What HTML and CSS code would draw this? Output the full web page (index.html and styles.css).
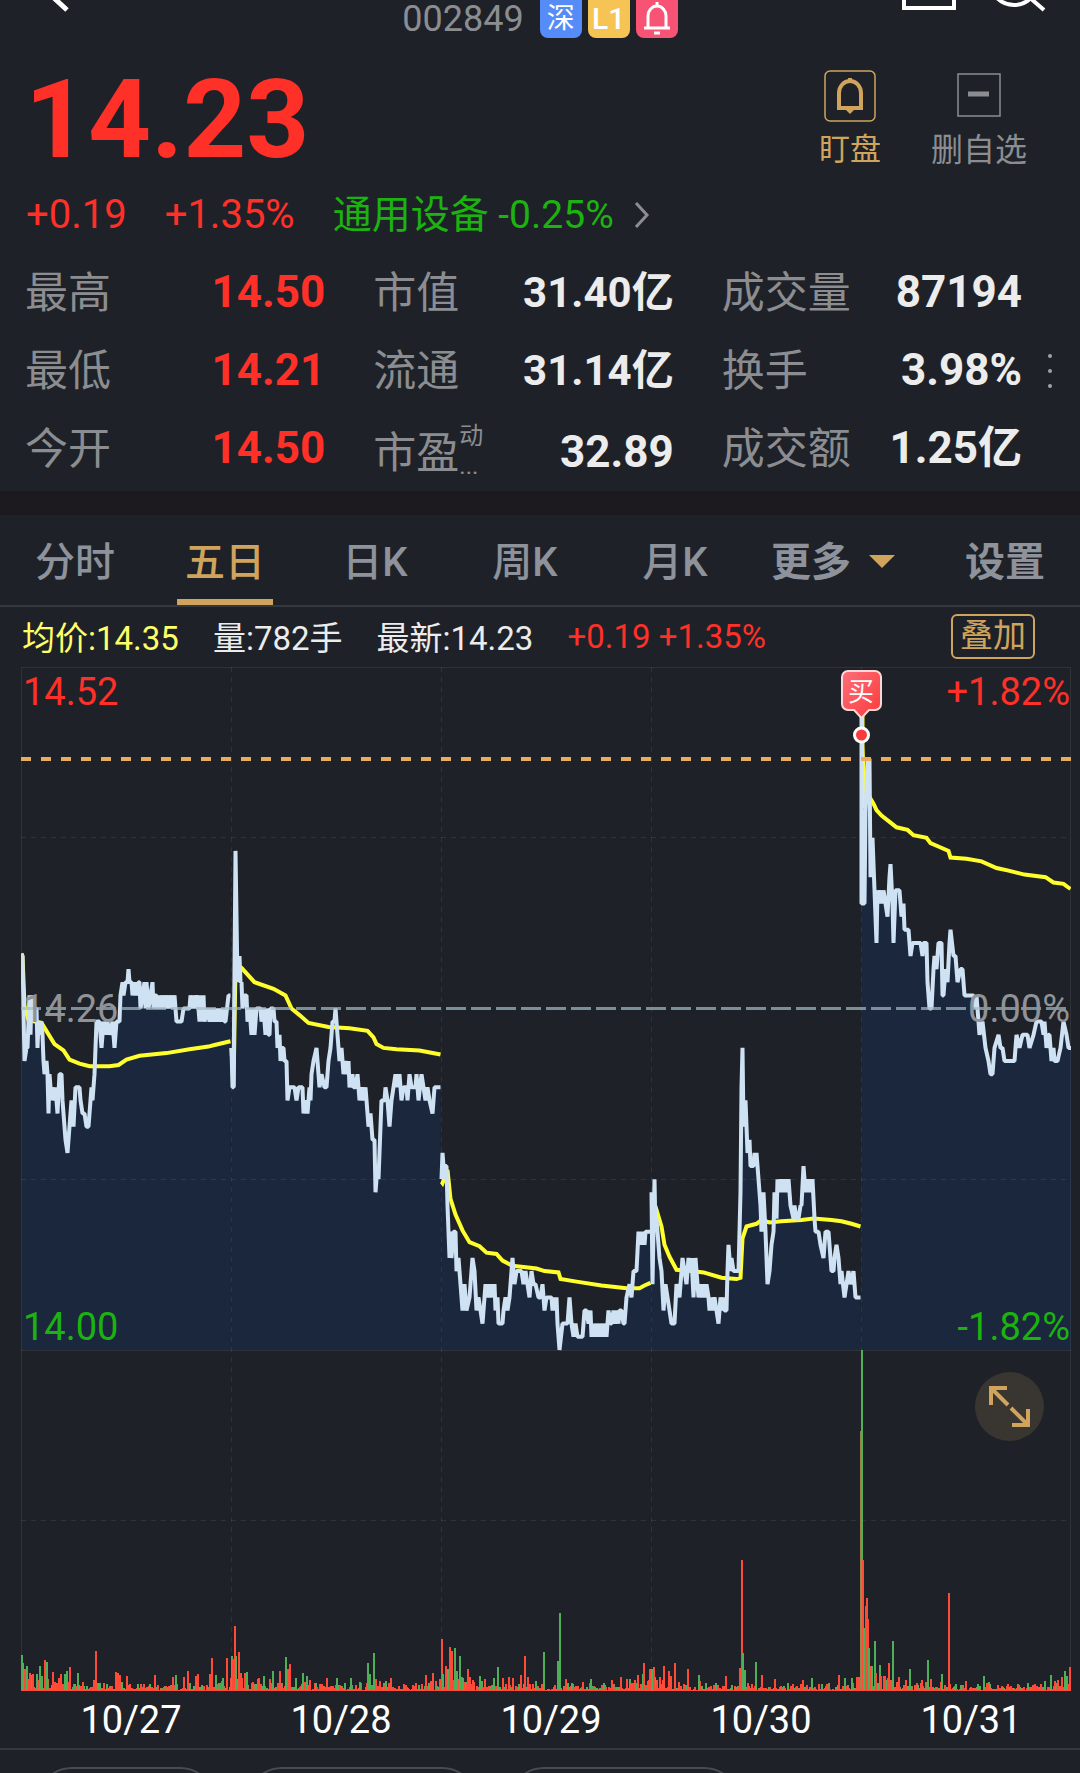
FILE: index.html
```html
<!DOCTYPE html>
<html lang="zh-CN">
<head>
  <meta charset="UTF-8" />
  <meta name="viewport" content="width=device-width, initial-scale=1.0" />
  <title>002849</title>
  <link rel="stylesheet" href="styles.css">
</head>
<body>
  <header class="topbar">
    <button class="icon-btn back" aria-label="返回">
      <svg width="60" height="38" viewBox="0 0 60 38"><path d="M34 -14 L22 -2 L35 10" class="stroke-white" /></svg>
    </button>
    <div class="code-line">
      <span class="code">002849</span>
      <span class="badge blue">深</span>
      <span class="badge yellow">L1</span>
      <span class="badge pink">
        <svg width="30" height="34" viewBox="0 0 30 34"><path d="M15 0v5M6 25V14a9 10 0 0 1 18 0v11M2 26h26M12 31h6" /></svg>
      </span>
    </div>
    <div class="top-actions">
      <button class="icon-btn" aria-label="分享">
        <svg width="56" height="38" viewBox="0 0 56 38"><path d="M4 -10V8H54V-10" class="stroke-white" /></svg>
      </button>
      <button class="icon-btn" aria-label="搜索">
        <svg width="56" height="38" viewBox="0 0 56 38"><circle cx="22" cy="-19" r="24" class="stroke-white" /><path d="M37 -3 L52 10" class="stroke-white" /></svg>
      </button>
    </div>
  </header>

  <section class="quote">
    <div class="price-row">
      <span class="price red">14.23</span>
      <div class="actions">
        <button class="action gold">
          <svg width="52" height="52" viewBox="0 0 52 52">
            <rect x="1" y="1" width="50" height="50" rx="5" stroke-width="1.5" />
            <path d="M26 8v3M15 38V23a11 12 0 0 1 22 0v15M13 38h26" stroke-width="4" />
            <path d="M22 40h8l-4 4z" fill="currentColor" stroke="none" />
          </svg>
          <span>盯盘</span>
        </button>
        <button class="action">
          <svg width="52" height="52" viewBox="0 0 52 52">
            <rect x="5" y="4" width="42" height="42" stroke-width="1.5" />
            <path d="M15 24h21" stroke-width="5" />
          </svg>
          <span>删自选</span>
        </button>
      </div>
    </div>

    <div class="change-row">
      <span class="red">+0.19</span>
      <span class="red">+1.35%</span>
      <a href="#" class="sector green">通用设备 -0.25%
        <svg width="16" height="28" viewBox="0 0 16 28"><path d="M2 2 L13 14 L2 26" /></svg>
      </a>
    </div>

    <div class="stats-wrap">
      <dl class="stats">
        <div><dt>最高</dt><dd class="red">14.50</dd></div>
        <div><dt>市值</dt><dd class="long">31.40亿</dd></div>
        <div><dt>成交量</dt><dd>87194</dd></div>
        <div><dt>最低</dt><dd class="red">14.21</dd></div>
        <div><dt>流通</dt><dd class="long">31.14亿</dd></div>
        <div><dt>换手</dt><dd>3.98%</dd></div>
        <div><dt>今开</dt><dd class="red">14.50</dd></div>
        <div class="pe"><dt>市盈<span class="pe-note"><small>动</small><small>...</small></span></dt><dd>32.89</dd></div>
        <div><dt>成交额</dt><dd>1.25亿</dd></div>
      </dl>
      <button class="icon-btn more-dots" aria-label="更多指标">
        <svg width="6" height="36" viewBox="0 0 6 36"><circle cx="3" cy="3" r="2" /><circle cx="3" cy="18" r="2" /><circle cx="3" cy="33" r="2" /></svg>
      </button>
    </div>
  </section>

  <nav class="tabs">
    <button>分时</button>
    <button class="active">五日</button>
    <button>日K</button>
    <button>周K</button>
    <button>月K</button>
    <button class="bold">更多<span class="caret"></span></button>
    <button class="bold settings">设置</button>
  </nav>

  <div class="info">
    <span class="yellow-text">均价:14.35</span>
    <span>量:782手</span>
    <span>最新:14.23</span>
    <span class="red">+0.19 +1.35%</span>
    <button class="overlay-btn">叠加</button>
  </div>

  <main class="chart">
    <svg class="plot" viewBox="21 667 1050 1025" role="img" aria-label="五日走势">
      <defs>
        <linearGradient id="buyFill" x1="0" y1="0" x2="1" y2="1">
          <stop offset="0" stop-color="#ff6f78" />
          <stop offset="1" stop-color="#f93a3c" />
        </linearGradient>
      </defs>
      <g id="areas"></g>
      <g class="grid">
        <path d="M21 837.5H1071M21 1179.5H1071M21 1520.5H1071" />
        <path d="M231.5 667V1691M441.5 667V1691M651.5 667V1691M861.5 667V1691" />
        <path class="frame" d="M21.5 667.5H1070.5V1691M21.5 667.5V1691M21 1350.5H1071" />
      </g>
      <g id="averages"></g>
      <g id="prices"></g>
      <path class="zero-line" d="M21 1008.5H1071" />
      <path class="cost-line" d="M21 759H1071" />
      <g id="volumes"></g>
      <g class="axis">
        <text class="up" x="23" y="705">14.52</text>
        <text class="up end" x="1070" y="705">+1.82%</text>
        <text class="flat" x="23" y="1022">14.26</text>
        <text class="flat end" x="1070" y="1022">0.00%</text>
        <text class="down" x="23" y="1340">14.00</text>
        <text class="down end" x="1070" y="1340">-1.82%</text>
      </g>
      <g class="buy">
        <path d="M848 671h27a6 6 0 0 1 6 6v27a6 6 0 0 1 -6 6h-6l-7.500 8l-7.500 -8h-6a6 6 0 0 1 -6 -6v-27a6 6 0 0 1 6 -6z" />
        <text x="861" y="701">买</text>
        <circle cx="861.5" cy="735" r="7" />
      </g>
    </svg>
    <button class="expand" aria-label="全屏">
      <svg width="42" height="42" viewBox="0 0 42 42"><path d="M2 19V2H18M2 2L19 19M39 23V39H23M39 39L22 22" /></svg>
    </button>
  </main>

  <div class="dates">
    <span>10/27</span>
    <span>10/28</span>
    <span>10/29</span>
    <span>10/30</span>
    <span>10/31</span>
  </div>

  <footer class="pills">
    <button aria-label="选项一"></button>
    <button class="wide" aria-label="选项二"></button>
    <button class="wide" aria-label="选项三"></button>
  </footer>

  <script src="chart.js"></script>
</body>
</html>
```
FILE: styles.css
```css
* {
  box-sizing: border-box;
  margin: 0;
  padding: 0;
}

body {
  height: 100vh;
  overflow: hidden;
  background-color: #1e2228;
  color: #ececec;
  font-family: Roboto, "Noto Sans CJK SC", sans-serif;
}

button {
  background: none;
  border: none;
  color: inherit;
  font: inherit;
  cursor: pointer;
}

svg {
  display: block;
  fill: none;
  stroke: currentColor;
}

.red {
  color: #ff3028;
}

.green {
  color: #1cb310;
}

.gold {
  color: #d0a45c;
}

.yellow-text {
  color: #ffff66;
}

/* top bar */
.topbar {
  display: grid;
  grid-template-columns: 1fr auto 1fr;
  height: 38px;
  padding: 0 32px;
}

.stroke-white {
  stroke: #fff;
  stroke-width: 4;
}

.back {
  justify-self: start;
}

.back .stroke-white {
  stroke-width: 5;
}

.code-line {
  display: flex;
  gap: 6px;
}

.code {
  margin-right: 10px;
  color: #8c8d91;
  font-size: 36px;
  line-height: 38px;
}

.badge {
  display: flex;
  justify-content: center;
  align-items: center;
  width: 42px;
  height: 38px;
  border-radius: 0 0 8px 8px;
  color: #fff;
  font-size: 28px;
  line-height: 34px;
}

.badge svg {
  stroke-width: 3;
}

.blue {
  background-color: #568cf7;
}

.yellow {
  background-color: #f6c454;
  font-size: 30px;
  font-weight: 500;
}

.pink {
  background-color: #f85275;
}

.top-actions {
  display: flex;
  justify-content: flex-end;
  gap: 36px;
}

/* quote */
.quote {
  padding: 26px 25px 4px;
}

.price-row {
  display: flex;
  justify-content: space-between;
}

.price {
  font-size: 110px;
  font-weight: 700;
  line-height: 112px;
}

.actions {
  display: flex;
  gap: 50px;
  padding: 6px 28px 0 0;
}

.action {
  display: flex;
  flex-direction: column;
  align-items: center;
  gap: 8px;
  color: #8c8d91;
  font-size: 32px;
  line-height: 40px;
}

.action.gold {
  color: #d0a45c;
  font-size: 31px;
}

.change-row {
  display: flex;
  gap: 38px;
  margin-top: 15px;
  padding-left: 1px;
  font-size: 40px;
  line-height: 48px;
}

.sector {
  display: flex;
  align-items: center;
  gap: 20px;
  font-size: 39px;
  text-decoration: none;
}

.sector svg {
  stroke: #8c8d91;
  stroke-width: 3;
}

.stats-wrap {
  position: relative;
  margin-top: 14px;
  padding-right: 33px;
}

.stats {
  display: grid;
  grid-template-columns: repeat(3, 1fr);
  column-gap: 48px;
}

.stats div {
  display: flex;
  justify-content: space-between;
  height: 78px;
  font-size: 44px;
  line-height: 78px;
}

.stats dt {
  display: flex;
  color: #8c8d91;
  font-size: 43px;
  line-height: 80px;
}

.stats dd {
  font-weight: 700;
}

.stats .long {
  font-size: 42px;
  line-height: 80px;
}

.stats .pe {
  padding-top: 4px;
}

.pe-note {
  display: flex;
  flex-direction: column;
  padding-top: 8px;
}

.pe-note small {
  font-size: 24px;
  line-height: 30px;
}

.more-dots {
  position: absolute;
  top: 100px;
  right: 2px;
}

.more-dots svg {
  fill: #a0a1a5;
  stroke: none;
}

/* period tabs */
.tabs {
  display: grid;
  grid-template-columns: repeat(5, 15fr) 17fr 16fr;
  border-top: 24px solid #1c1a1f;
  border-bottom: 2px solid #34373c;
}

.tabs button {
  position: relative;
  height: 90px;
  padding-bottom: 2px;
  color: #8d929b;
  font-size: 40px;
  font-weight: 500;
}

.tabs .active {
  color: #d0a45c;
}

.tabs .active::after {
  content: "";
  position: absolute;
  bottom: 0;
  left: calc(50% - 48px);
  width: 96px;
  height: 6px;
  background-color: #d0a45c;
}

.tabs .bold {
  font-weight: 700;
}

.tabs .bold:not(.settings) {
  padding-right: 4px;
}

.tabs .settings {
  padding-left: 10px;
}

.caret {
  display: inline-block;
  margin-left: 18px;
  border: 13px solid transparent;
  border-top-color: #d0a45c;
  border-bottom: 0;
  vertical-align: 8px;
}

/* values line */
.info {
  display: flex;
  align-items: center;
  gap: 34px;
  height: 60px;
  padding: 0 45px 2px 22px;
  font-size: 33px;
}

.overlay-btn {
  height: 45px;
  margin-left: auto;
  padding: 0 7px;
  border: 2px solid #d0a45c;
  border-radius: 6px;
  color: #d0a45c;
  line-height: 40px;
}

/* chart */
.chart {
  position: relative;
  padding: 0 9px 0 21px;
}

.plot {
  width: 100%;
  stroke: none;
}

.grid path {
  stroke: #ffffff;
  stroke-opacity: 0.08;
  stroke-dasharray: 5 5;
}

.grid .frame {
  stroke-dasharray: none;
}

#areas path {
  fill: #1b273d;
}

#averages path {
  fill: none;
  stroke: #ffff2e;
  stroke-width: 4;
}

#prices path {
  fill: none;
  stroke: #cfe2f3;
  stroke-width: 4;
}

.zero-line {
  stroke: #a4bcc4;
  stroke-opacity: 0.7;
  stroke-width: 3;
  stroke-dasharray: 20 5;
}

.cost-line {
  stroke: #e9ab5e;
  stroke-width: 4;
  stroke-dasharray: 10 10;
}

.vol-up {
  fill: #ff4a38;
}

.vol-down {
  fill: #4fae58;
}

.vol-mixed {
  fill: #9c8148;
}

.axis text {
  font-size: 38px;
}

.axis .end {
  text-anchor: end;
}

.up {
  fill: #ff3028;
}

.down {
  fill: #1cb310;
}

.flat {
  fill: #909499;
}

.buy path {
  fill: url(#buyFill);
  stroke: #ffd9d9;
  stroke-width: 2;
}

.buy text {
  fill: #fff;
  font-size: 26px;
  text-anchor: middle;
}

.buy circle {
  fill: #f93a3c;
  stroke: #fff;
  stroke-width: 3;
}

.expand {
  display: flex;
  justify-content: center;
  align-items: center;
  position: absolute;
  right: 36px;
  bottom: 251px;
  width: 69px;
  height: 69px;
  border-radius: 50%;
  background-color: #393530;
  color: #d0a45c;
}

.expand svg {
  stroke-width: 4;
}

.dates {
  display: grid;
  grid-template-columns: repeat(5, 1fr);
  padding: 0 4px 0 26px;
  border-bottom: 2px solid #34373c;
  color: #fff;
  font-size: 38px;
  line-height: 56px;
  text-align: center;
}

.pills {
  display: flex;
  gap: 30px;
  padding: 17px 36px;
}

.pills button {
  width: 180px;
  height: 72px;
  border: 2px solid #494b50;
  border-radius: 36px;
}

.pills .wide {
  width: 232px;
}
```
FILE: chart.js
```js
const LEFT = 21.5;
const DAY_WIDTH = 210;
const ZERO_Y = 1008.5;
const TICK = 13.13;
const PRICE_BOTTOM = 1350;
const VOLUME_BOTTOM = 1691;

// "x,price" inside one day, price is the cents above 14.00
const prices = [
  '0,30 1,30 3,22 5,23 6,23 8,27 9,24 10,27 12,26 13,25 14,26 15,26 16,23 17,25 18,24 20,25 21,24 22,22 23,21 25,22 26,21 27,18 28,21 30,19 31,20 33,19 34,20 36,18 38,21 40,21 41,19 42,18 44,16 46,15 48,17 49,18 50,19 52,17 54,20 58,20 59,19 61,18 63,18 65,17 67,17 68,18 70,20 71,19 73,21 75,25 78,25 80,23 82,25 84,24 86,25 88,24 91,25 93,23 95,25 98,25 99,27 101,28 102,27 104,28 106,28 107,29 108,28 110,28 111,27 113,28 115,27 117,28 118,28 119,26 121,27 123,28 124,26 125,28 127,26 129,27 131,28 132,26 133,27 135,27 136,26 138,27 139,26 141,27 142,26 144,27 145,26 147,27 148,26 150,27 151,26 153,27 155,25 160,25 162,26 168,26 169,27 171,26 172,27 173,26 175,27 177,26 178,25 179,27 181,25 182,27 183,25 186,26 188,25 190,26 192,25 194,26 196,25 198,26 200,25 202,26 203,25 204,25 207,27 209,27',
  '0,23 1,20 2,20 4,38 5,33 6,28 8,30 9,28 10,28 11,26 13,27 15,27 16,25 18,26 20,24 21,26 23,24 25,26 29,26 30,25 32,26 34,24 35,26 37,24 38,24 39,26 42,26 43,25 45,25 46,23 48,24 49,22 50,23 52,23 53,22 55,22 56,19 58,20 63,20 65,19 67,20 71,20 72,18 74,19 76,18 78,20 79,19 80,21 82,22 85,23 86,22 88,20 90,21 93,20 95,20 97,22 99,23 101,25 103,25 104,26 106,24 108,22 110,23 112,21 114,22 115,21 117,22 118,20 121,21 122,20 124,20 126,21 128,19 130,20 132,19 134,20 135,19 137,17 139,18 141,16 143,16 144,12 146,14 147,13 148,15 150,19 153,19 154,20 156,19 158,17 160,19 162,20 164,21 166,20 168,21 170,19 172,20 175,20 176,19 178,21 180,20 184,20 185,21 187,19 190,21 192,20 194,19 196,20 198,19 201,18 203,20 209,20',
  '0,13 1,15 3,13 4,14 5,14 6,11 8,7 9,9 10,7 12,9 14,9 15,6 17,7 18,6 19,5 21,3 23,5 25,3 28,4 29,5 31,7 33,6 35,3 37,4 39,3 41,2 43,4 44,5 46,4 48,5 49,4 51,5 52,4 53,5 54,3 56,4 57,2 61,2 62,3 64,4 66,3 68,4 70,6 71,7 73,5 75,6 80,6 82,5 84,6 86,5 88,4 90,6 92,5 94,5 97,4 99,4 101,5 103,3 105,4 110,4 111,3 113,4 114,3 115,4 116,2 118,0 121,2 126,2 128,4 130,2 132,1 134,2 136,1 141,1 143,3 145,3 147,2 149,3 150,1 152,2 153,1 155,2 156,1 158,2 159,1 161,2 162,1 164,2 165,1 167,3 169,2 170,2 172,3 174,2 175,3 177,2 178,3 180,3 182,2 183,2 185,4 188,5 190,4 192,6 195,6 197,9 199,8 201,9 203,8 204,9 209,9',
  '0,12 1,5 3,13 4,9 5,10 6,9 8,7 10,6 12,3 14,5 16,4 18,3 20,2 23,2 25,5 28,4 31,7 33,6 35,5 37,7 39,6 40,7 42,4 44,7 47,4 49,5 50,4 52,5 53,4 55,5 57,4 58,3 60,4 61,3 63,4 65,3 67,2 69,4 71,3 72,4 73,3 75,3 76,6 77,8 79,6 80,7 82,6 87,6 88,9 89,12 90,20 91,23 92,17 94,19 96,15 98,16 99,14 102,14 103,15 104,14 105,15 107,13 109,11 110,9 112,12 114,9 116,5 118,6 120,8 122,9 123,12 125,10 126,13 128,12 129,13 131,12 132,13 134,12 135,13 136,12 137,13 139,11 142,10 143,11 145,10 147,10 149,11 150,11 152,14 154,12 155,13 157,12 158,13 159,12 161,13 163,10 164,9 167,9 169,8 172,7 174,9 177,9 179,7 180,6 182,6 183,7 185,8 187,7 189,5 190,6 193,4 195,5 197,6 199,5 202,6 204,4 209,4',
  '0,50 0,34 3,34 4,41 6,45 8,45 9,36 11,39 13,35 15,31 16,35 18,34 20,35 21,34 22,35 24,34 26,33 28,36 29,37 31,34 32,31 34,35 38,35 40,33 42,34 43,32 47,32 49,30 51,31 59,31 61,30 62,31 65,31 66,28 68,26 70,26 72,29 73,30 75,29 77,31 80,31 81,27 82,27 84,29 86,28 88,31 89,32 92,30 94,30 96,28 99,29 101,29 103,27 112,27 113,26 115,27 117,25 118,24 121,25 124,23 127,22 129,21 131,21 133,23 137,24 139,23 141,23 143,22 153,22 155,24 158,23 161,24 166,24 168,23 172,24 175,25 180,25 182,24 183,25 185,23 187,24 188,24 190,22 192,23 193,22 196,22 199,23 202,25 205,24 207,23 210,23'
];

const averages = [
  '0,30.2 1,30 3,26.2 7,25.1 20,24.9 33,23.3 42,22.8 48,22.1 58,21.8 68,21.6 88,21.6 97,21.7 105,22.1 118,22.4 145,22.6 168,22.9 187,23.1 192,23.2 209,23.5',
  '0,23 2,20 4,29.2 10,29.1 23,28 42,27.5 54,27 60,26 68,25.5 77,24.9 97,24.6 118,24.5 136,24.3 142,23.8 145,23.3 152,23 165,22.9 188,22.8 209,22.5',
  '0,12.8 1,12.7 6,13.7 9,11.5 14,10.3 21,9.1 28,8.2 38,7.9 45,7.4 55,7.3 61,6.8 71,6.4 95,6.2 103,6 117,5.9 119,5.4 135,5.2 160,4.9 185,4.7 198,4.7 203,4.9 209,5.1',
  '2,9 6,10.4 10,9.4 13,8 18,7.1 25,6.1 40,6 52,5.9 70,5.5 85,5.4 89,5.5 91,8.5 95,9.4 105,9.6 110,9.9 118,9.7 130,9.8 150,9.9 162,10 180,9.9 190,9.8 200,9.6 209,9.4',
  '1,49 1,46 3,41.6 8,42.1 12,41.6 15,41.1 20,40.7 30,40.1 35,39.8 46,39.6 52,39.2 65,39 69,38.6 78,38.3 87,38 89,37.5 105,37.4 120,37.2 135,36.7 147,36.5 163,36.2 184,36 192,35.6 202,35.5 209,35.1'
];

// "x,height,colour": r up, g down, m both
const volumes = [
  '1,36,g 2,28,g 4,22,r 6,25,g 9,18,r 11,16,g 12,17,r 16,17,g 19,25,g 21,15,g 24,31,r 26,29,g 32,19,r 38,13,r 40,17,r 44,17,g 46,20,g 49,24,r 57,18,g 62,9,r 73,11,r 75,40,r 79,8,g 95,19,r 97,18,r 99,16,r 106,15,r 117,7,g 134,16,r 152,14,r 155,16,g 163,14,r 167,20,r 175,15,r 177,17,r 189,17,r 191,33,r 195,16,g 206,33,r',
  '1,35,g 2,32,r 4,65,r 5,35,g 8,39,r 10,18,r 14,18,r 16,19,g 28,13,r 33,15,g 39,12,r 42,20,g 49,20,r 55,34,g 57,22,r 59,27,r 65,13,g 72,18,g 76,15,g 79,11,r 91,7,r 96,13,r 106,13,g 114,8,g 120,13,g 129,9,g 137,28,g 139,17,g 143,38,g 145,12,r 149,10,r 155,10,g 160,13,r 175,6,r 185,8,r 191,7,r 195,16,r 198,8,g 202,18,r 209,12,r',
  '1,52,r 2,17,g 5,25,r 7,22,g 9,44,r 11,40,r 14,43,g 16,20,g 19,35,g 22,13,g 27,22,r 29,14,r 39,15,g 44,12,r 53,13,g 57,24,g 62,13,r 68,14,r 72,13,r 80,16,r 84,35,r 87,14,r 95,10,g 103,39,g 117,30,g 119,78,g 125,12,r 131,8,g 150,12,g 163,8,g 171,11,r 180,14,r 186,12,r 197,16,r 202,17,g 203,28,r 209,22,r',
  '1,22,g 3,24,r 9,14,r 13,25,r 18,20,r 20,15,r 24,28,r 28,9,r 37,22,r 48,16,g 55,8,g 65,8,g 75,15,r 89,23,r 91,131,r 92,38,g 94,21,g 97,8,r 105,29,g 111,16,r 124,12,r 137,8,g 152,11,r 161,13,g 171,7,g 188,16,r 194,13,g 201,13,g 206,14,r 208,14,r',
  '0,260,m 1,341,g 2,131,r 3,63,g 5,85,r 6,93,r 7,72,r 8,43,g 10,25,r 11,25,g 14,50,g 15,18,r 19,26,g 20,15,r 24,15,r 28,28,r 32,50,g 38,14,r 45,11,r 49,22,g 61,11,r 67,31,g 70,12,r 81,17,g 88,98,r 94,5,g 105,10,r 117,7,g 123,15,g 127,8,r 147,7,r 158,6,r 167,8,g 172,6,r 184,10,g 190,16,g 197,5,r 204,20,g 206,15,g 209,24,r'
];

const volumeClass = { r: 'vol-up', g: 'vol-down', m: 'vol-mixed' };

function toPoints(text, day) {
  return text.split(' ').map(function(pair) {
    const [x, cents] = pair.split(',').map(Number);
    return [LEFT + day * DAY_WIDTH + x, ZERO_Y - (cents - 26) * TICK];
  });
}

function toPath(points) {
  return 'M' + points.map(p => p[0].toFixed(1) + ' ' + p[1].toFixed(1)).join('L');
}

function bar(x, height, colour) {
  return `<rect class="${volumeClass[colour]}" x="${x}" y="${VOLUME_BOTTOM - height}" width="2" height="${height}" />`;
}

let areaHtml = '';
let priceHtml = '';
let averageHtml = '';
let volumeHtml = '';
let seed = 7;

function random() {
  seed = (seed * 16807) % 2147483647;
  return seed / 2147483647;
}

prices.forEach(function(text, day) {
  const points = toPoints(text, day);
  const line = toPath(points);
  const first = points[0][0];
  const last = points[points.length - 1][0];

  areaHtml += `<path d="${line}L${last + 1} ${PRICE_BOTTOM}L${first} ${PRICE_BOTTOM}Z" />`;
  priceHtml += `<path stroke-linejoin="bevel" d="${line}" />`;
  averageHtml += `<path d="${toPath(toPoints(averages[day], day))}" />`;

  // small trades between the peaks, busier near open and close
  const start = 21 + day * DAY_WIDTH;
  for (let x = 0; x < DAY_WIDTH; x++) {
    const busy = x < 50 ? 22 - x / 4 : x > 185 ? 14 : 9;
    const height = Math.round(1 + busy * random() * random());
    volumeHtml += bar(start + x, height, random() < 0.22 ? 'g' : random() < 0.15 ? 'm' : 'r');
  }
  volumes[day].split(' ').forEach(function(item) {
    const [x, height, colour] = item.split(',');
    volumeHtml += bar(start + Number(x) - 1, Number(height), colour);
  });
});

volumeHtml += `<rect class="vol-up" x="21" y="${VOLUME_BOTTOM - 1}" width="1050" height="1" />`;

document.getElementById('areas').innerHTML = areaHtml;
document.getElementById('prices').innerHTML = priceHtml;
document.getElementById('averages').innerHTML = averageHtml;
document.getElementById('volumes').innerHTML = volumeHtml;
```
